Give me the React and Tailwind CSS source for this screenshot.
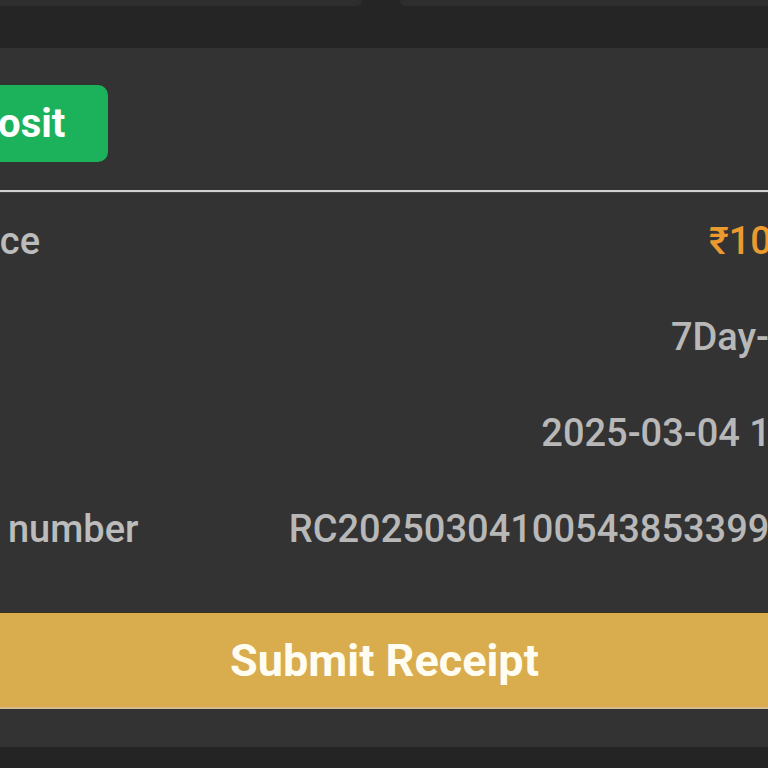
export default function App() {
  const rows = [
    { label: "Balance", value: "₹10,000.00", orange: true },
    { label: "Type", value: "7Day-Deposit" },
    { label: "Time", value: "2025-03-04 10:05:43" },
    { label: "Order number", value: "RC20250304100543853399917284" },
  ];
  return (
    <div
      className="w-[768px] h-[768px] overflow-hidden bg-[#252525] flex flex-col"
      style={{ fontFamily: "Roboto, 'Noto Sans', sans-serif" }}
    >
      <div className="h-[6px] flex shrink-0">
        <div className="w-[362px] h-full bg-[#2e2e2e] rounded-br-[8px]" />
        <div className="w-[38px]" />
        <div className="flex-1 h-full bg-[#2e2e2e] rounded-bl-[8px]" />
      </div>
      <div className="mt-[42px] h-[699px] shrink-0 bg-[#333333] overflow-hidden">
        <div className="ml-[-124px] w-[1017px] flex flex-col">
          <div className="pt-[37px] pl-[29px]">
            <div className="w-[203px] h-[77px] rounded-[10px] bg-[#1cb25b] flex items-center pl-[23px] text-white text-[40px] font-bold leading-none">
              Deposit
            </div>
          </div>
          <div className="mt-[28px] h-[2px] bg-[#d2d2d2]" />
          <div className="h-[1px] bg-[#444444]" />
          <div className="flex flex-col mr-[-6px]">
            {rows.map((r) => (
              <div
                key={r.label}
                className="h-[96px] flex items-center justify-between pl-[28px] text-[38px] font-medium leading-none"
              >
                <span className="text-[#bcbcbc]">{r.label}</span>
                <span className={r.orange ? "text-[#eb9a30]" : "text-[#b8b8b8]"}>
                  {r.value}
                </span>
              </div>
            ))}
          </div>
          <div className="mt-[35px] h-[97px] bg-[#d9ac4d] border-t border-[#3a3118] border-b-2 border-b-[#d3b98b] flex items-center justify-center text-[#fffdf2] text-[45px] font-bold leading-none">
            Submit Receipt
          </div>
        </div>
      </div>
      <div className="flex-1 bg-[#242424]" />
    </div>
  );
}
